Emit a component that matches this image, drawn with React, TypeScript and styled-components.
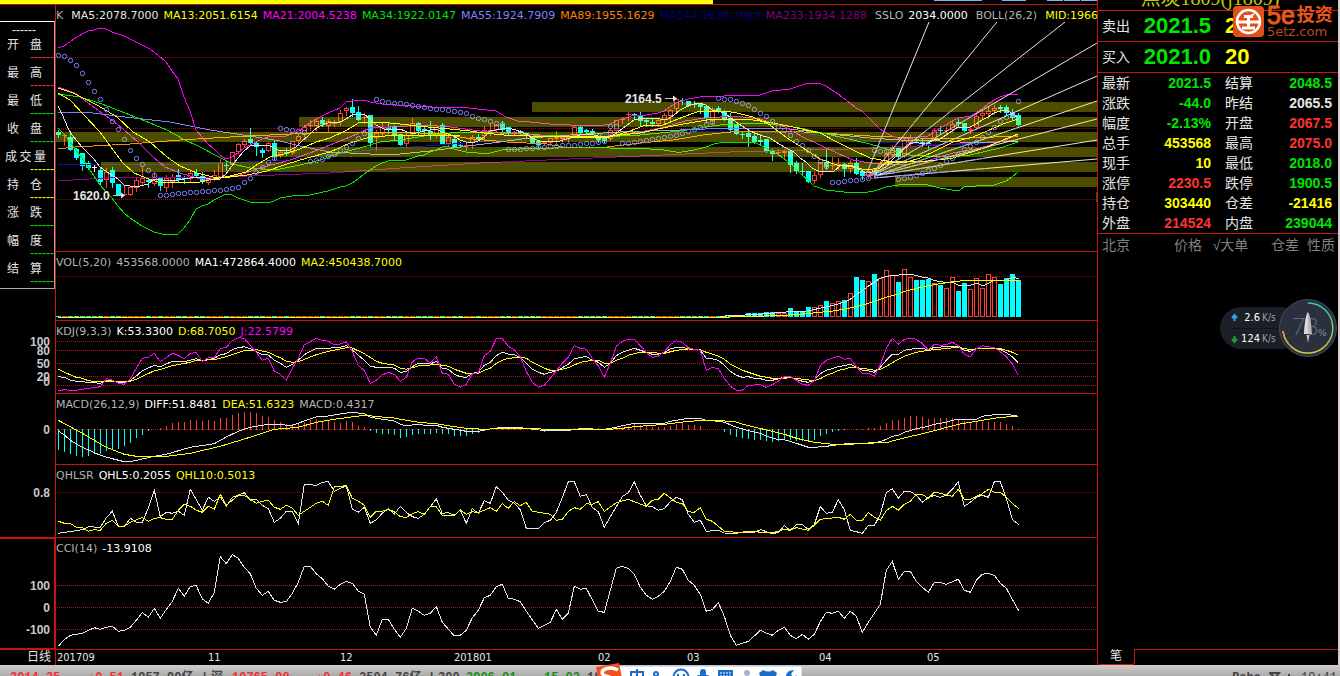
import React from "react";
import styled, { createGlobalStyle } from "styled-components";

const red = "#c8140a";
const sans = `"DejaVu Sans", "Noto Sans CJK SC", sans-serif`;
const bold = `"Liberation Sans", "Noto Sans CJK SC", sans-serif`;

const Global = createGlobalStyle`
  * { box-sizing: border-box; }
  html, body { margin: 0; background: #000; }
  button { font: inherit; cursor: pointer; }
`;

/* ---------- page frame ---------- */
const Screen = styled.div`
  position: relative;
  display: flex;
  flex-direction: column;
  height: 100vh;
  overflow: hidden;
  background: #000;
  color: #e6e6e6;
  font: 11px/20px ${sans};
`;
const Workspace = styled.main`
  display: flex;
  flex: none;
`;
const ChartSide = styled.section`
  flex: 1;
  min-width: 0;
`;
const TopStrip = styled.div`
  display: flex;
  height: 4px;
`;
const Progress = styled.div`
  width: 65%;
  background: #ff0;
`;
const Mark = styled.i<{ $w: number; $gap: number }>`
  width: ${(p) => p.$w}px;
  height: 1px;
  margin-left: ${(p) => p.$gap}px;
  background: #7cb4f0;
`;
const MarkRow = styled.div`
  display: flex;
  flex: 1;
  justify-content: flex-end;
`;
const ChartBody = styled.div`
  display: flex;
`;
const AxisColumn = styled.div`
  width: 55px;
  flex: none;
`;
const PanelColumn = styled.div`
  flex: 1;
  min-width: 0;
  border-left: 1px solid ${red};
`;

/* ---------- left column ---------- */
const FieldArea = styled.div`
  height: 316px;
  padding-top: 16px;
  border-top: 1px solid ${red};
`;
const FieldBox = styled.dl`
  margin: 0;
  border: solid #a8a8a8;
  border-width: 1px 1px 1px 0;
  border-top-color: #fff;
  font: 12px/18px ${bold};
`;
const Dashes = styled.dd<{ $color: string; $head?: boolean }>`
  height: 14px;
  margin: 0;
  padding: ${(p) => (p.$head ? "0 0 0 12px" : "0 0 0 30px")};
  line-height: ${(p) => (p.$head ? 17 : 14)}px;
  color: ${(p) => p.$color};
`;
const Field = styled.dt`
  display: flex;
  justify-content: space-between;
  height: 14px;
  padding: 0 12px 0 7px;
  &[data-wide="true"] {
    padding: 0 8px 0 5px;
  }
`;
const AxisCell = styled.div<{ $h: number; $active?: boolean }>`
  height: ${(p) => p.$h}px;
  border: solid ${red};
  border-width: ${(p) => (p.$active ? "2px 1px 2px 0" : "0")};
  svg {
    display: block;
    width: 100%;
    height: 100%;
    overflow: visible;
  }
  text {
    font: bold 12px ${bold};
    fill: #c8c8c8;
    text-anchor: end;
  }
`;
const Period = styled.div`
  height: 15px;
  padding-right: 4px;
  text-align: right;
  font: 12px/15px ${bold};
`;

/* ---------- chart panels ---------- */
const PanelBox = styled.section<{ $h: number }>`
  display: grid;
  height: ${(p) => p.$h}px;
  border-top: 1px solid ${red};
  overflow: hidden;
  > * {
    grid-area: 1 / 1;
    min-width: 0;
  }
  > svg {
    width: 100%;
    height: 100%;
  }
`;
const Legend = styled.header`
  display: flex;
  gap: 5px;
  height: 22px;
  line-height: 22px;
  overflow: hidden;
  white-space: nowrap;
  z-index: 1;
`;
const Tag = styled.span<{ $color: string; $wide?: boolean }>`
  color: ${(p) => p.$color};
  margin-right: ${(p) => (p.$wide ? 3 : 0)}px;
`;
const Months = styled.div`
  height: 16px;
  border-top: 1px solid ${red};
  svg {
    display: block;
    width: 100%;
    height: 15px;
  }
  text {
    font: 11px "DejaVu Sans Condensed", ${sans};
    fill: #e6e6e6;
  }
`;

/* ---------- quote column ---------- */
const Quote = styled.aside`
  display: flex;
  flex-direction: column;
  width: 241px;
  flex: none;
  border-left: 1px solid ${red};
  font: 14px/20px ${bold};
`;
const Title = styled.h1`
  display: flex;
  align-items: flex-end;
  justify-content: center;
  height: 10px;
  margin: 0;
  padding-right: 16px;
  overflow: hidden;
  font: 20px/24px "Liberation Serif", "Noto Sans CJK SC", serif;
  color: #c8c800;
`;
const Deal = styled.div`
  display: grid;
  grid-template-columns: 28px 81px 1fr;
  align-items: center;
  height: 31px;
  padding-left: 4px;
  border-top: 1px solid ${red};
`;
const Price = styled.strong`
  text-align: right;
  font-size: 22px;
  color: #00e600;
`;
const Lots = styled.strong`
  padding-left: 14px;
  font-size: 22px;
  color: #ff0;
`;
const Figures = styled.table`
  width: 100%;
  border-collapse: collapse;
  border: solid ${red};
  border-width: 1px 0;
  table-layout: fixed;
  th,
  td {
    height: 20px;
    padding: 0;
    line-height: 20px;
  }
  th {
    width: 32px;
    padding-left: 4px;
    font-weight: normal;
    text-align: left;
    white-space: nowrap;
  }
  th + td {
    width: 81px;
  }
  th + td + th {
    width: 42px;
    padding-left: 14px;
  }
  th + td + th + td {
    width: auto;
  }
`;
const Figure = styled.td<{ $color: string; $last?: boolean }>`
  font-weight: bold;
  text-align: right;
  color: ${(p) => p.$color};
  && {
    padding-right: ${(p) => (p.$last ? 6 : 0)}px;
  }
`;
const TickHead = styled.div`
  display: flex;
  height: 24px;
  padding: 0 3px 0 4px;
  line-height: 22px;
  color: #808080;
  span:first-child {
    flex: 1;
  }
  span + span {
    margin-left: 8px;
  }
  span:nth-child(3) {
    min-width: 41px;
    text-align: center;
  }
  span:nth-child(4) {
    margin-left: 20px;
  }
`;
const TabBar = styled.div`
  display: flex;
  height: 16px;
  margin-top: auto;
`;
const Tab = styled.button`
  width: 37px;
  height: 16px;
  padding: 0;
  border: solid ${red};
  border-width: 0 1px 1px 0;
  border-radius: 0 0 3px 3px;
  background: none;
  color: #e6e6e6;
  font-size: 12px;
  line-height: 15px;
`;
const TabRest = styled.div`
  flex: 1;
  border-top: 1px solid ${red};
`;
const Edge = styled.div`
  width: 2px;
  flex: none;
  background: #d4cccc;
`;

/* ---------- floating parts ---------- */
const Brand = styled.a`
  position: absolute;
  top: 5px;
  right: 7px;
  display: flex;
  gap: 3px;
  color: #e8581c;
  text-decoration: none;
  white-space: nowrap;
  svg {
    display: block;
  }
`;
const BrandText = styled.span`
  display: flex;
  flex-direction: column;
  width: 66px;
`;
const BrandName = styled.b`
  display: flex;
  align-items: center;
  font: bold 18px/20px ${bold};
  span {
    margin-right: 2px;
    font: 25px/20px ${bold};
    -webkit-text-stroke: 1px #e8581c;
  }
`;
const BrandUrl = styled.span`
  font: 13px/13px ${sans};
  color: #b8481c;
`;
const NetMeter = styled.div`
  position: absolute;
  top: 298px;
  right: 3px;
  display: flex;
  align-items: center;
  svg {
    display: block;
  }
`;
const Speeds = styled.div`
  display: flex;
  flex-direction: column;
  width: 82px;
  margin-right: -23px;
  padding-left: 10px;
  border-radius: 21px;
  background: #1b1f28;
`;
const Speed = styled.div`
  display: grid;
  grid-template-columns: 9px 19px 1fr;
  gap: 2px;
  align-items: center;
  height: 21px;
  font: 11px/20px "DejaVu Sans Condensed", ${sans};
  color: #fff;
  text-align: right;
  & + & {
    border-top: 1px solid #11141a;
  }
  small {
    font-size: 10px;
    text-align: left;
    color: #9a9ea8;
  }
`;

/* ---------- status bar ---------- */
const Status = styled.footer`
  display: flex;
  align-items: center;
  flex: none;
  height: 24px;
  padding: 2px 3px 0 10px;
  background: linear-gradient(#d0cecc, #a8a8a8 12px);
  font: bold 12px/20px "Liberation Mono", "Noto Sans CJK SC", monospace;
  color: #444;
  white-space: nowrap;
`;
const Cell = styled.span<{ $w: number; $color?: string }>`
  width: ${(p) => p.$w}px;
  flex: none;
  color: ${(p) => p.$color || "#444"};
`;
const Clock = styled.span`
  display: flex;
  align-items: center;
  gap: 8px;
  margin-left: auto;
  font-weight: normal;
`;
const Ime = styled.div`
  position: absolute;
  left: 596px;
  top: 663px;
  svg {
    display: block;
  }
`;

/* ---------- series ---------- */
const barX = (i: number) => 58.5 + 6 * i;
type Bar = [0 | 1, number, number, number, number];

/* up flag, body top, body bottom, high, low */
const bars: Bar[] = [
  [0,132,135,130,137],[1,135,135,135,145],[0,137,150,133,150],[0,149,158,148,159],[0,153,166,153,170],[0,163,168,161,169],[0,167,167,164,171],[0,170,182,167,184],[1,172,180,168,187],[0,170,183,167,187],
  [0,184,195,184,195],[1,194,195,186,195],[1,187,195,187,195],[1,180,188,177,191],[1,178,183,166,184],[0,180,182,177,187],[1,177,184,172,185],[0,177,186,177,190],[1,178,188,175,191],[1,177,182,174,187],
  [0,175,180,169,181],[0,178,179,176,183],[1,173,179,171,181],[0,173,176,169,177],[0,176,182,172,183],[1,179,183,177,184],[1,175,179,170,180],[1,163,177,159,177],[0,165,165,161,170],[1,152,165,152,165],
  [1,144,152,143,153],[1,141,145,139,147],[0,139,143,128,143],[0,143,147,141,155],[0,150,153,148,157],[1,143,151,142,151],[0,143,157,140,160],[1,152,156,150,157],[0,152,154,148,155],[1,141,153,141,154],
  [1,136,141,133,143],[1,127,135,125,136],[1,125,125,120,130],[1,121,126,119,130],[0,120,124,117,126],[1,121,126,119,132],[1,123,123,120,126],[1,113,122,110,125],[1,108,111,107,115],[0,107,113,99,116],
  [0,112,120,106,120],[1,117,118,113,123],[0,115,143,115,146],[1,133,138,130,150],[1,127,134,122,136],[0,127,129,123,133],[0,127,135,125,140],[0,134,145,134,145],[1,135,144,133,146],[1,123,134,118,137],
  [0,123,131,122,135],[0,129,131,127,134],[0,131,136,121,139],[1,127,135,125,137],[0,125,144,123,144],[1,137,144,133,146],[0,139,147,137,147],[0,145,146,142,147],[1,145,146,142,150],[1,137,143,135,148],
  [0,137,139,134,141],[1,130,136,126,141],[1,130,131,124,135],[1,125,130,124,131],[0,124,130,121,131],[0,127,134,127,134],[1,132,133,131,135],[0,131,133,130,135],[0,133,136,133,137],[0,137,143,137,143],
  [0,141,145,140,147],[1,142,143,141,145],[1,138,143,137,145],[1,137,139,131,143],[1,137,139,136,143],[1,137,139,135,142],[1,127,136,125,137],[0,127,133,126,134],[0,130,132,129,134],[0,131,134,129,137],
  [0,135,140,133,142],[0,137,141,136,142],[1,130,139,128,140],[1,120,131,120,131],[1,119,120,117,123],[1,114,115,112,120],[0,114,116,113,118],[0,115,121,112,125],[0,120,122,118,126],[0,122,124,119,126],
  [1,120,124,118,126],[1,115,120,113,123],[1,110,116,109,120],[1,99,109,98,111],[0,100,101,98,104],[0,101,106,101,106],[0,104,105,101,107],[0,104,107,103,113],[0,106,118,105,122],[1,109,121,107,123],
  [0,108,111,106,112],[0,112,119,110,120],[0,118,130,113,132],[0,125,134,125,134],[0,134,135,132,138],[0,133,137,131,146],[0,136,142,133,143],[0,140,142,134,145],[0,139,152,139,152],[0,151,154,149,160],
  [1,152,153,149,155],[1,151,153,149,158],[0,151,165,150,172],[0,163,171,161,173],[0,171,172,163,174],[0,171,182,171,182],[1,175,181,172,183],[1,162,175,162,177],[0,162,167,150,169],[1,165,166,157,169],
  [1,164,166,158,169],[0,164,169,163,176],[1,163,169,160,172],[0,163,174,158,174],[0,171,176,170,179],[1,171,176,169,178],[0,170,175,168,177],[1,163,171,161,173],[1,154,164,150,166],[1,148,155,145,157],
  [0,148,157,148,158],[1,140,156,138,157],[1,138,143,135,145],[0,139,141,137,143],[0,142,144,139,146],[0,143,146,141,148],[1,130,139,128,140],[0,130,131,126,134],[1,130,131,127,135],[1,124,130,121,132],
  [0,122,124,119,126],[0,123,131,123,131],[1,129,131,126,133],[1,116,128,114,129],[1,113,116,111,118],[1,111,114,106,118],[1,108,111,105,114],[0,107,109,105,112],[0,107,113,105,115],[0,113,118,109,120],
  [0,115,125,113,125],
];

const sar = [
  55,56,60,65,73,82,91,99,109,121,129,139,150,158,164,170,175,
  195,195,194,193,193,192,192,191,191,190,190,189,188,187,182,178,172,167,162,158,
  128,129,130,131,132,
  161,160,159,156,154,150,147,143,138,133,129,
  99,101,102,103,103,104,105,106,107,108,109,109,110,111,112,113,116,118,119,121,123,124,
  149,149,149,148,148,147,147,146,146,145,145,145,144,143,143,142,141,
  126,126,
  143,143,142,141,140,139,138,137,136,135,133,131,129,127,124,122,
  98,99,99,101,103,105,109,113,116,121,126,130,135,141,145,150,156,161,166,
  182,182,181,180,180,179,178,
  150,151,151,150,
  179,178,177,175,173,170,168,165,161,158,154,149,146,142,137,132,127,121,117,114,
  101,
];

const overlays: [string, string][] = [
  ["#10109a", "58,164 200,164 290,160 370,150 440,145 530,138 600,135 720,131 800,133 880,142 950,145 1018,141"],
  ["#900090", "58,181 120,177 220,177 330,173 400,168 480,163 570,159 640,156 730,152 850,149 940,145 1018,140"],
  ["#ff8c00", "58,149 75,147 130,144 180,140 230,137 290,134 330,132 400,132 440,134 473,139 507,142 547,144 563,147 607,147 640,143 673,140 703,135 730,132 753,131 787,131 820,133 870,136 920,138 970,138 1018,136"],
  ["#8080ff", "58,113 85,112 125,117 170,122 210,130 250,136 280,141 300,146 330,152"],
  ["#a0a0c8", "330,152 370,154 400,154 430,151 460,147 500,142 530,138 570,135 620,132 680,130"],
  ["#8080ff", "680,130 730,128 790,129"],
  ["#a0a0c8", "790,129 830,134 870,138 900,140 940,141 980,143 1018,141"],
  ["#00e600", "58,94 80,97 102,104 125,113 150,123 167,130 183,139 200,147 217,156 233,164 250,168 275,170 300,165 320,160 340,153 360,148 380,142 400,140 430,135 460,132 500,133 560,136 600,137 640,135 680,131 720,125 760,123 780,125 800,128 840,137 870,144 890,150 910,155 940,157 970,155 1000,148 1018,142"],
  ["#e61ee6", "58,87 75,93 95,108 117,124 137,141 153,157 165,167 180,173 197,178 213,179 240,175 260,168 290,160 310,153 330,145 350,137 370,128 390,127 425,125 450,127 480,131 520,134 560,137 600,137 640,132 665,127 685,121 705,118 735,116 760,119 785,127 803,137 820,145 837,153 853,160 870,163 887,165 910,164 930,160 953,153 980,148 1000,142 1018,135"],
  ["#ffff00", "58,88 73,93 97,105 117,117 133,132 150,142 167,157 180,166 197,173 213,177 230,177 247,175 267,171 287,164 307,158 330,152 350,143 370,137 400,135 460,136 560,136 610,136 640,133 663,128 683,124 707,120 730,119 753,120 773,123 793,127 820,133 837,142 853,150 870,158 887,161 920,162 953,158 987,147 1003,140 1018,134"],
  ["#ffff00", "58,93 70,100 84,115 100,132 113,150 123,163 134,173 146,178 158,182 180,183 200,182 214,179 230,176 246,172 258,164 270,157 284,154 300,149 316,142 330,138 347,130 360,122 380,122 400,124 417,126 450,129 470,131 484,133 504,135 530,136 570,137 610,137 630,131 643,126 663,125 683,117 697,112 724,111 737,113 753,117 770,125 787,138 803,148 820,159 837,165 853,167 867,170 880,168 887,162 907,162 920,158 937,150 953,142 973,137 987,131 1003,124 1018,119"],
  ["#e6e6e6", "58,106 62,114 68,128 72,135 82,147 94,159 100,167 110,174 118,179 124,185 136,187 148,184 154,179 166,181 178,180 190,178 202,177 214,180 220,179 226,174 232,166 238,158 244,151 250,146 262,145 270,146 278,150 288,151 296,147 302,141 308,136 314,130 320,126 328,123 340,122 346,119 352,115 364,114 370,119 376,125 386,130 400,129 412,134 424,131 436,129 442,132 454,136 460,140 466,142 472,143 478,141 484,137 490,131 496,130 508,128 516,130 526,134 532,138 540,141 550,142 560,141 570,138 580,135 590,134 598,136 606,138 612,136 618,132 626,126 634,120 642,118 650,118 660,119 668,119 674,115 680,110 688,106 694,104 700,103 706,105 712,110 718,111 724,113 730,117 736,122 742,126 750,131 760,135 770,138 776,142 784,147 794,152 800,158 806,162 812,168 820,172 834,171 840,166 850,165 856,167 864,172 872,172 880,170 886,167 892,160 898,154 904,149 910,144 916,142 922,144 928,143 934,140 940,139 946,135 952,131 958,127 970,127 976,124 982,120 988,117 994,113 1000,111 1006,110 1012,113 1018,118"],
  ["#ff00ff", "58,48 64,46 74,39 82,34 88,31 94,30 100,28 106,29 112,32 124,36 136,42 150,49 158,55 166,62 172,71 178,79 184,97 190,111 196,130 202,137 208,144 214,149 220,155 226,159 232,157 238,153 244,148 256,142 262,139 268,137 286,136 298,132 304,127 310,123 316,119 328,113 340,108 346,102 352,101 364,100 370,102 382,104 412,106 430,107 448,108 460,107 478,109 496,111 506,117 518,121 530,122 550,124 570,125 604,125 610,124 616,121 622,119 628,117 634,115 646,115 658,113 664,111 670,107 676,103 682,101 688,99 700,97 712,96 724,96 760,95 772,91 790,89 802,85 808,83 818,83 826,86 838,94 850,103 856,108 862,111 868,117 874,123 880,129 886,133 892,136 898,138 904,139 910,138 928,136 934,132 940,128 946,125 952,121 958,118 970,116 976,113 982,109 988,104 994,100 1000,97 1006,95 1012,94 1018,95"],
  ["#00e600", "58,128 64,134 70,142 76,150 82,158 88,167 94,176 100,185 106,192 112,198 118,206 124,213 130,218 142,226 154,232 162,234 178,234 184,228 190,220 196,209 202,206 208,204 214,200 226,194 232,195 238,198 250,202 268,203 274,201 280,198 292,196 310,195 328,191 334,189 340,187 346,186 352,183 358,179 364,174 370,170 376,166 382,163 388,161 406,160 412,158 418,156 424,155 430,152 436,150 442,147 448,146 454,149 466,152 478,153 490,153 502,150 520,149 590,147 610,148 634,148 650,149 664,150 676,152 682,152 694,150 706,147 714,144 724,142 742,142 756,143 766,148 772,152 778,154 784,159 790,163 796,169 802,175 808,180 814,186 826,190 844,192 862,193 874,191 886,187 898,185 904,184 928,185 940,188 952,190 960,190 964,187 970,186 976,186 994,185 1006,181 1012,177 1018,172"],
];

const zones = [[56,132],[101,162],[272,147],[299,117],[532,102],[895,177]];
const rays = [[866,175,929,22],[872,174,997,22],[868,176,1065,22],[870,176,1097,43],[870,176,1097,76],[874,176,1097,101],[874,176,1097,119],[874,176,1097,140],[874,178,1097,159]];

/* Each run is "originX originY x y x y ...", offsets in thirds of a pixel. */
const trace = (...runs: string[]) =>
  runs
    .map((run) => {
      const [ox, oy, ...v] = run.trim().split(/[\s,]+/).map(Number);
      const out: string[] = [];
      for (let k = 0; k < v.length; k += 2)
        out.push(`${(ox + v[k] / 3).toFixed(1)},${(oy + v[k + 1] / 3).toFixed(1)}`);
      return out.join(" ");
    })
    .join(" ");

const kdj: [string, string][] = [
  ["#e6e6e6", trace(
    "0 245 175,395 193,397 211,406 229,409 265,412 301,415 319,406 337,407 355,412 373,413 391,406 409,393 427,377 463,361 481,365 517,349 553,350 589,341 607,348 643,340 661,329 679,326 697,314 715,308 733,305 751,311 787,329 805,330 823,346 841,355 859,367 877,358 895,346 913,329 931,319 949,310 985,310 1003,308 1021,307 1039,302 1057,314 1075,331 1093,346 1111,364 1129,367 1165,367 1183,370",
    "400 310 1,187 19,185 37,170 55,160 91,162 109,154 127,175 145,178 163,193 181,200 199,202 217,190 235,187 253,166 271,157 289,137 307,127 325,132 343,134 361,142 379,160 397,178 415,187 433,193 451,187 469,183 487,173 505,163 523,146 559,139 577,151 595,157 613,172 631,160 649,137 667,127 703,115 739,127 757,133 775,133 793,127 811,117 829,112 865,115 901,121 919,145 937,146 955,151 973,166 991,184 1009,196 1027,202",
    "720 250 85,380 103,385 121,386 139,391 157,391 193,382 211,382 247,394 265,397 283,390 301,371 319,361 355,350 391,343 409,352 427,361 445,362 463,367 481,352 499,331 517,313 535,313 553,301 589,295 607,295 625,299 643,292 715,289 733,301 751,304 769,296 823,294 841,299 859,308 877,320 895,338")],
  ["#ffff00", trace(
    "0 245 175,373 193,382 211,389 229,397 247,400 265,407 283,409 391,409 409,403 463,377 481,374 517,362 571,352 589,346 643,344 679,335 733,317 769,314 805,322 823,331 841,338 859,349 877,352 895,350 949,329 985,319 1039,308 1057,309 1093,326 1129,349 1147,355 1183,360",
    "400 310 1,175 19,178 55,168 91,165 109,163 145,169 163,178 199,190 235,190 253,181 271,175 289,160 307,151 325,145 361,142 379,145 397,157 433,175 451,181 469,182 505,173 541,157 577,151 595,151 613,160 631,160 649,151 667,145 685,136 703,131 721,127 793,130 829,121 865,117 901,119 919,127 955,138 973,148 991,162 1009,172 1027,181",
    "720 250 85,367 121,379 157,385 175,386 211,383 283,392 301,386 319,376 337,370 355,361 373,358 391,352 427,355 463,361 481,358 499,349 517,338 535,328 553,319 589,307 625,301 715,292 751,299 787,295 841,296 859,301 877,307 895,316")],
  ["#ff00ff", trace(
    "0 245 175,437 193,434 211,436 229,436 247,433 265,430 283,428 301,425 319,401 337,405 355,415 373,418 391,401 409,370 427,340 445,337 463,325 481,350 499,338 517,325 535,331 553,341 571,325 589,323 607,350 625,338 643,338 661,311 679,307 697,287 715,278 733,280 751,301 769,322 787,346 805,340 823,378 841,388 859,406 877,370 895,340 913,299 931,290 949,280 967,286 985,289 1003,299 1021,297 1039,290 1057,320 1075,361 1093,377 1111,415 1129,406 1147,390 1165,382 1183,388",
    "400 310 1,214 19,202 37,155 55,145 73,145 91,160 109,140 127,190 145,193 163,223 181,232 199,223 217,192 235,188 253,137 271,124 289,86 307,86 325,109 343,119 361,140 379,184 397,217 415,232 433,226 451,205 487,160 505,142 523,107 541,115 559,118 577,145 595,168 613,202 631,160 649,109 667,94 685,88 703,88 721,107 739,127 757,142 775,139 793,125 811,104 829,92 847,97 865,113 883,118 901,121 919,181 937,172 955,176 973,205 991,229 1009,241 1027,241",
    "720 250 85,406 121,404 139,412 157,404 175,394 193,380 211,379 229,392 247,403 265,406 283,392 301,347 319,331 355,319 373,328 391,325 409,350 427,370 445,370 463,379 481,345 499,295 517,265 535,283 553,268 571,265 589,268 607,281 625,299 643,283 661,286 679,284 697,277 715,287 733,313 751,320 769,296 787,287 823,293 841,305 859,320 877,342 895,376")],
];

const macd: [string, string][] = [
  ["#e6e6e6", trace(
    "0 245 175,558 193,570 211,586 247,607 301,631 337,641 373,650 391,650 409,646 463,634 499,628 571,607 643,596 679,576 715,559 751,547 805,538 877,541 913,528 949,516 985,513 1021,507 1057,502 1093,506 1111,517 1129,520 1183,528",
    "400 310 1,343 19,347 55,343 91,348 109,346 127,352 181,361 199,364 235,364 271,357 307,352 361,353 415,360 505,361 541,356 613,358 649,352 667,347 703,340 793,340 811,334 865,325 901,325 919,331 955,334 973,337 991,344 1009,352 1027,356",
    "720 250 85,542 121,550 139,559 175,569 193,569 229,580 265,592 283,592 319,589 355,584 391,580 427,580 463,578 481,575 499,568 517,559 535,556 553,547 589,536 625,529 643,523 679,517 697,511 715,508 769,508 787,499 823,494 859,493 895,499")],
  ["#ffff00", trace(
    "0 245 175,526 247,565 319,607 373,628 409,634 499,634 571,625 661,604 769,571 823,553 895,547 949,532 1003,523 1093,511 1147,516 1183,519",
    "400 310 1,328 55,337 109,341 163,350 199,355 253,358 307,355 397,355 433,358 613,359 667,355 703,350 757,346 811,341 865,334 919,331 1000,334 1027,342",
    "720 250 85,527 157,544 193,553 229,565 283,577 337,583 391,583 427,580 499,578 535,568 625,547 715,523 787,511 841,502 895,499")],
];
const histogram = [
  ...[615,620,627,632,636,633,627,627,618,610,610,603,594,579,568,557,553,549,541,534,531,531,525,525,528,525,528,519,519,510,504,499,501,504,513,516,525,531,537,537,535,529,525,522,527,528,531,532,528,531,541,546,557,563,567,567,569].map((v) => v - 553),
  ...[384,380,374,371,371,371,369,371,371,377,377,377,372,368,362,358,355,353,352,353,355,358,358,360,365,362,360,358,359,354,355,354,354,354,357,356,354,349,346,340,343,347,350,350,350,347,341,338,344,345,348,358,358,358,365,375,381,384,387].map((v) => v - 358),
  ...[570,570,573,576,573,568,570,573,573,574,570,557,552,546,541,539,538,537,537,534,534,528,519,510,510,504,498,498,501,507,504,504,504,504,507,513,516,516,516,514,514,516,522,528,537].map((v) => v - 538),
];

const qhl: [string, string][] = [
  ["#e6e6e6", trace(
    "0 460 175,220 247,209 265,200 301,202 319,173 337,154 355,199 373,199 391,175 409,187 427,187 445,145 463,91 481,170 499,157 517,160 535,154 553,166 571,88 607,151 625,112 643,124 661,112 679,139 697,112 733,98 751,121 769,118 787,136 805,146 823,187 841,175 859,154 877,154 895,190 913,73 949,76 967,67 985,65 1003,94 1039,77 1057,148 1075,157 1093,142 1111,190 1129,179 1147,160 1165,146 1183,163",
    "400 460 1,139 19,157 37,170 55,175 73,163 91,140 109,116 127,160 145,158 163,166 181,150 199,190 217,146 235,160 253,122 271,130 289,80 307,97 325,121 343,130 361,149 379,205 415,206 433,188 451,181 469,157 487,113 505,65 523,65 541,109 559,104 577,142 595,155 613,202 631,170 667,110 685,98 703,66 721,106 739,137 757,140 775,151 793,146 811,125 829,112 847,119 865,163 883,187 901,181 919,214 955,211 973,219 1009,220 1027,216",
    "740 460 30,216 45,216 63,209 97,222 117,216 133,197 151,211 169,194 187,194 205,208 223,194 241,140 259,160 277,157 295,119 313,149 331,211 349,215 367,220 385,197 403,197 421,163 439,98 457,86 475,115 493,94 511,94 529,106 547,127 565,113 583,106 601,112 619,106 637,88 655,65 673,139 691,127 709,112 727,106 745,112 763,65 781,65 799,115 817,178 836,194")],
  ["#ffff00", trace(
    "0 460 175,184 193,190 211,190 229,202 247,203 265,214 283,209 301,211 319,190 337,181 355,199 373,199 391,187 427,172 445,184 463,175 481,173 499,178 517,178 535,151 553,133 571,139 589,151 607,157 625,139 643,148 661,103 679,136 697,121 715,106 733,106 769,130 787,124 805,121 823,142 841,148 859,136 877,145 895,166 949,130 967,124 985,136 1003,80 1039,77 1057,115 1075,124 1093,136 1111,172 1129,154 1147,154 1165,148 1183,155",
    "400 460 1,170 19,172 37,161 55,155 73,163 91,140 109,140 127,166 163,166 181,150 199,163 217,155 235,158 271,143 289,154 307,131 325,145 343,125 361,137 379,127 397,154 451,163 469,181 487,178 505,154 523,143 541,148 559,131 577,133 595,125 613,154 649,128 685,118 703,125 739,139 757,121 775,118 793,100 829,127 847,131 865,155 883,157 901,143 919,178 937,184 973,214 1009,217",
    "740 460 30,215 80,217 97,219 133,208 151,211 169,203 205,211 223,196 241,178 295,172 313,178 331,163 349,181 367,181 385,157 403,172 421,181 439,152 457,139 475,151 493,133 511,124 529,103 547,103 565,115 583,97 601,100 637,109 655,88 673,118 691,118 727,101 745,88 763,97 781,97 799,112 817,130 836,146")],
];

const cci: [string, string][] = [
  ["#e6e6e6", trace(
    "0 460 175,559 193,539 211,526 247,520 283,503 301,508 319,502 337,499 355,514 373,511 391,502 409,481 427,457 445,472 463,445 481,475 499,448 517,424 535,385 553,409 571,379 589,377 607,417 625,430 643,397 661,290 679,311 697,284 715,295 733,322 751,341 769,385 787,406 805,394 823,421 841,427 859,425 877,400 895,367 913,319 931,319 949,341 967,356 985,379 1003,388 1021,373 1039,364 1057,370 1075,394 1093,403 1111,502 1129,526 1147,478 1165,478 1183,508",
    "400 460 1,532 19,505 37,445 55,454 73,466 91,460 109,440 127,487 163,528 181,526 199,511 217,473 235,451 253,413 271,406 289,380 307,373 325,415 343,418 361,425 379,454 415,505 451,487 469,448 487,478 505,460 523,379 541,388 559,385 595,454 613,457 631,391 649,325 667,319 685,325 703,343 721,382 739,406 757,418 775,409 793,394 811,364 829,322 847,328 865,361 883,376 901,403 919,454 937,449 955,428 973,469 991,526 1009,556",
    "740 460 26,544 61,511 80,520 97,526 115,511 133,502 151,526 169,536 187,523 205,538 223,523 241,485 259,457 277,460 295,454 313,475 331,454 349,469 367,517 385,487 421,433 439,331 457,304 475,358 493,334 511,334 529,364 547,382 565,397 583,367 601,367 619,373 655,358 673,391 691,397 709,361 727,343 745,340 763,346 781,370 799,385 817,418 836,452")],
];

const volume = [195,196,197,189,189,189,186,186,187,188,174,184,184,171,171,165,153,157,151,150,127,81,90,91,72,82,58,73,96,55,81,90,90,87,99,105,112,79,123,99,115,82,112,70,79,102,84,72,90].map((v) => Math.round((200 - v) / 3));
const volumeLines: [string, string][] = [
  ["#e6e6e6", trace("720 250 0,199 50,196 100,194 150,190 190,187 215,184 260,183 300,175 340,166 375,156 390,148 410,133 450,105 480,85 510,77 550,74 575,73 600,80 625,84 645,92 680,98 700,98 715,106 750,106 770,100 790,107 820,93 860,90 880,82 896,86")],
  ["#ffff00", trace("0 250 175,202 2160,202", "720 250 100,199 170,197 240,193 300,187 340,183 380,176 420,167 460,155 500,141 535,133 550,125 580,118 620,108 660,101 700,95 740,91 896,91")],
];

/* ---------- drawing helpers ---------- */
const Lines = ({ data }: { data: [string, string][] }) => (
  <g fill="none" strokeWidth="1" shapeRendering="crispEdges">
    {data.map(([color, points], i) => (
      <polyline key={i} stroke={color} points={points} />
    ))}
  </g>
);

type PanelProps = {
  label: string;
  top: number;
  height: number;
  grid: number[];
  gridColor?: string;
  legend: [string, string, boolean?][];
  children: React.ReactNode;
};
const Panel = ({ label, top, height, grid, gridColor = "#b41414", legend, children }: PanelProps) => (
  <PanelBox $h={height} aria-label={label}>
    <Legend>
      {legend.map(([color, text, wide], i) => (
        <Tag key={i} $color={color} $wide={wide}>{text}</Tag>
      ))}
    </Legend>
    <svg aria-hidden="true">
      <g transform={`translate(-56 ${-top - 1})`}>
        {grid.map((y) => (
          <line key={y} x1="57" x2="200%" y1={y + 0.5} y2={y + 0.5} stroke={gridColor} strokeDasharray="1 1" shapeRendering="crispEdges" />
        ))}
        {children}
      </g>
    </svg>
  </PanelBox>
);

const Candles = () => (
  <g shapeRendering="crispEdges">
    {bars.map(([up, t, b, h, l], i) => {
      const x = barX(i);
      const c = i === 6 ? "#fff" : up ? "#ff3c32" : "#00ffff";
      const flat = b - t < 2;
      return (
        <g key={i} stroke={c} fill={up ? "#000" : c}>
          <line x1={x} x2={x} y1={h} y2={l + 1} />
          {flat ? <line x1={x - 2.5} x2={x + 2.5} y1={t + 0.5} y2={t + 0.5} /> : <rect x={x - 2} y={t + 0.5} width="4" height={b - t - 1} />}
        </g>
      );
    })}
  </g>
);

const Axis = ({ h, top, labels, active }: { h: number; top: number; labels: [string, number][]; active?: boolean }) => (
  <AxisCell $h={h} $active={active}>
    <svg>
      {labels.map(([t, y]) => (
        <text key={t} x="50" y={y - top + 5}>{t}</text>
      ))}
    </svg>
  </AxisCell>
);

const g = "#00e600";
const r = "#ff3232";
const y = "#ffff00";
const w = "#e6e6e6";
const dim = "#b4b4b4";

const fields: [string, string][] = [
  ["开盘", r], ["最高", r], ["最低", g], ["收盘", g], ["成交量", y], ["持仓", y], ["涨跌", g], ["幅度", g], ["结算", g],
];
const figures: [string, string, string, string, string, string][] = [
  ["最新", "2021.5", g, "结算", "2048.5", g],
  ["涨跌", "-44.0", g, "昨结", "2065.5", w],
  ["幅度", "-2.13%", g, "开盘", "2067.5", r],
  ["总手", "453568", y, "最高", "2075.0", r],
  ["现手", "10", y, "最低", "2018.0", g],
  ["涨停", "2230.5", r, "跌停", "1900.5", g],
  ["持仓", "303440", y, "仓差", "-21416", y],
  ["外盘", "214524", r, "内盘", "239044", g],
];
const months: [string, number][] = [["201709", 57], ["11", 208], ["12", 340], ["201801", 454], ["02", 598], ["03", 687], ["04", 819], ["05", 927]];

export default function App() {
  return (
    <Screen>
      <Global />
      <Workspace>
        <ChartSide>
          <TopStrip>
            <Progress />
            <MarkRow>
              <Mark $w={48} $gap={0} />
              <Mark $w={24} $gap={20} />
              <Mark $w={16} $gap={21} />
              <Mark $w={16} $gap={1} />
              <Mark $w={16} $gap={1} />
            </MarkRow>
          </TopStrip>
          <ChartBody>
            <AxisColumn>
              <FieldArea>
                <FieldBox>
                  <Dashes $color={w} $head>------</Dashes>
                  {fields.map(([name, color]) => (
                    <React.Fragment key={name}>
                      <Field data-wide={name.length > 2}>
                        {name.split("").map((ch) => <span key={ch}>{ch}</span>)}
                      </Field>
                      <Dashes $color={color}>------</Dashes>
                    </React.Fragment>
                  ))}
                </FieldBox>
              </FieldArea>
              <Axis h={73} top={320} labels={[["100", 341], ["80", 350], ["50", 363], ["20", 376], ["0", 381]]} />
              <Axis h={71} top={393} labels={[["0", 429]]} />
              <Axis h={73} top={464} labels={[["0.8", 492]]} />
              <Axis h={113} top={539} labels={[["100", 585], ["0", 607], ["-100", 629]]} active />
              <Period>日线</Period>
            </AxisColumn>
            <PanelColumn>
              <Panel label="K" top={4} height={247} grid={[57, 128, 199]} gridColor="#8c0c0c"
                legend={[[dim, "K", true], [w, "MA5:2078.7000"], [y, "MA13:2051.6154"], ["#ff00ff", "MA21:2004.5238"], [g, "MA34:1922.0147"], ["#8080ff", "MA55:1924.7909"], ["#ff8000", "MA89:1955.1629"], ["#000080", "MA144:1938.7083"], ["#800080", "MA233:1934.1288", true], [dim, "SSLO"], ["#fff", "2034.0000", true], [dim, "BOLL(26,2)", true], [y, "MID:1966.4519"]]}>
                <Candles />
                <Lines data={overlays} />
                <g fill="none" stroke="#8080ff">
                  {sar.map((v, i) => <circle key={i} cx={barX(i)} cy={v + 0.5} r="2.2" />)}
                </g>
                <g>
                  {rays.map(([x1, y1, x2, y2], i) => (
                    <g key={i}>
                      <line x1={x1} y1={y1} x2={x2} y2={y2} stroke="#fff" strokeOpacity="0.9" />
                      <line x1={x1} y1={y1} x2={(x1 + x2) / 2} y2={(y1 + y2) / 2} stroke="#8888ff" strokeDasharray="6 3" />
                    </g>
                  ))}
                  <path d="M866 172l12 5M864 176l14-5M868 170l4 9M874 170l-2 9" stroke="#ff5032" strokeDasharray="2 2" />
                  <path d="M878 174L1018 128" stroke="#00e600" strokeDasharray="2 4" />
                </g>
                <g fill="#ffff00" opacity="0.3">
                  {zones.map(([x, top]) => <rect key={top} x={x} y={top} width="100%" height="10" />)}
                  <rect x="1096" y="192" width="2" height="10" />
                </g>
                <g fill="#e6e6e6" stroke="#c8c8c8">
                  <path d="M113 195.500H123" /><path d="M121 192.500l4 3-4 3z" stroke="none" />
                  <path d="M665 98.500H675" /><path d="M673 95.500l4 3-4 3z" stroke="none" />
                </g>
                <g fill={w} fontFamily="Liberation Sans, sans-serif" fontWeight="bold" fontSize="12">
                  <text x="73" y="200">1620.0</text>
                  <text x="625" y="103">2164.5</text>
                </g>
              </Panel>
              <Panel label="VOL" top={251} height={69} grid={[276]} gridColor="#8c0c0c" legend={[[dim, "VOL(5,20)"], [dim, "453568.0000"], ["#fff", "MA1:472864.4000"], [y, "MA2:450438.7000"]]}>
                <g shapeRendering="crispEdges">
                  {bars.map(([up], i) => {
                    const h = i < 112 ? 1 : Math.max(1, volume[i - 112]);
                    const x = barX(i);
                    return up && h > 3
                      ? <rect key={i} x={x - 2} y={317 - h + 0.5} width="4" height={h - 1} fill="#000" stroke="#ff3c32" />
                      : <rect key={i} x={x - 2.5} y={317 - h} width="5" height={h} fill={up ? "#ff3c32" : "#00ffff"} />;
                  })}
                </g>
                <Lines data={volumeLines} />
              </Panel>
              <Panel label="KDJ" top={320} height={73} grid={[341, 350, 363, 376, 385]} legend={[[dim, "KDJ(9,3,3)"], ["#fff", "K:53.3300"], [y, "D:68.7050"], ["#ff00ff", "J:22.5799"]]}>
                <Lines data={kdj} />
              </Panel>
              <Panel label="MACD" top={393} height={71} grid={[429]} legend={[[dim, "MACD(26,12,9)"], ["#fff", "DIFF:51.8481"], [y, "DEA:51.6323"], [dim, "MACD:0.4317"]]}>
                <g shapeRendering="crispEdges">
                  {histogram.map((v, i) => (
                    <line key={i} x1={barX(i)} x2={barX(i)} y1={v > 0 ? 429 : 430} y2={429.5 + v / 3} stroke={v > 0 ? "#00ffff" : "#ff3c32"} />
                  ))}
                </g>
                <Lines data={macd} />
              </Panel>
              <Panel label="QHLSR" top={464} height={73} grid={[492]} gridColor="#8c0c0c" legend={[[dim, "QHLSR"], ["#fff", "QHL5:0.2055"], [y, "QHL10:0.5013"]]}>
                <Lines data={qhl} />
              </Panel>
              <Panel label="CCI" top={537} height={112} grid={[585, 607, 629]} legend={[[dim, "CCI(14)"], ["#fff", "-13.9108"]]}>
                <Lines data={cci} />
              </Panel>
              <Months>
                <svg>
                  {months.map(([t, x]) => <text key={t} x={x - 56} y="11">{t}</text>)}
                </svg>
              </Months>
            </PanelColumn>
          </ChartBody>
        </ChartSide>
        <Quote>
          <Title>焦炭1809(j1809)</Title>
          <Deal><span>卖出</span><Price>2021.5</Price><Lots>20</Lots></Deal>
          <Deal><span>买入</span><Price>2021.0</Price><Lots>20</Lots></Deal>
          <Figures>
            <tbody>
              {figures.map(([a, av, ac, b, bv, bc]) => (
                <tr key={a}>
                  <th scope="row">{a}</th>
                  <Figure $color={ac}>{av}</Figure>
                  <th scope="row">{b}</th>
                  <Figure $color={bc} $last>{bv}</Figure>
                </tr>
              ))}
            </tbody>
          </Figures>
          <TickHead><span>北京</span><span>价格</span><span>√大单</span><span>仓差</span><span>性质</span></TickHead>
          <TabBar><Tab type="button">笔</Tab><TabRest /></TabBar>
        </Quote>
        <Edge />
      </Workspace>
      <Status>
        <Cell $w={78} $color="#f03030">3014.35</Cell>
        <Cell $w={43} $color="#f03030">↓0.51</Cell>
        <Cell $w={70}>1957.90亿</Cell>
        <Cell $w={10}>|</Cell>
        <Cell $w={21}>深</Cell>
        <Cell $w={84} $color="#f03030">10765.98</Cell>
        <Cell $w={43} $color="#f03030">↓0.46</Cell>
        <Cell $w={69}>2504.76亿</Cell>
        <Cell $w={10}>|</Cell>
        <Cell $w={28}>300</Cell>
        <Cell $w={78} $color="#149014">3906.01</Cell>
        <Cell $w={43} $color="#149014">15.03</Cell>
        <Cell $w={40}>1857</Cell>
        <Clock>
          <b>Baba</b>
          <svg width="24" height="14" fill="none" stroke="#444" strokeWidth="2"><path d="M1 2h9L6 7zM6 6v7M15 13V7M20 13V3" /></svg>
          <span>19:41</span>
        </Clock>
      </Status>
      <Brand href="#">
        <svg width="31" height="32" viewBox="0 0 31 32">
          <rect y="1" width="31" height="31" rx="4" fill="#e05018" />
          <circle cx="15.500" cy="16.500" r="11.500" fill="none" stroke="#fff" strokeWidth="2.500" />
          <path d="M11 11.500h9M5 17h21M9 23h13M15.500 12v11" stroke="#fff" strokeWidth="3" fill="none" />
          <path d="M21 9l-7 4" stroke="#fff" strokeWidth="2" />
        </svg>
        <BrandText>
          <BrandName><span>5e</span>投资</BrandName>
          <BrandUrl>5etz.com</BrandUrl>
        </BrandText>
      </Brand>
      <NetMeter>
        <Speeds>
          <Speed>
            <svg width="9" height="9" stroke="#30a8e8" strokeWidth="2" fill="none"><path d="M4.500 8V2M2 5l2.500-3L7 5" /></svg>
            2.6<small>K/s</small>
          </Speed>
          <Speed>
            <svg width="9" height="9" stroke="#20a030" strokeWidth="2" fill="none"><path d="M4.500 1v6M2 4l2.500 3L7 4" /></svg>
            124<small>K/s</small>
          </Speed>
        </Speeds>
        <svg width="58" height="60" viewBox="0 0 58 60">
          <defs>
            <linearGradient id="ring" x1="0" y1="0" x2="0" y2="1">
              <stop offset="0" stopColor="#28c8c8" /><stop offset=".6" stopColor="#88c860" /><stop offset="1" stopColor="#d8c838" />
            </linearGradient>
          </defs>
          <circle cx="29" cy="30" r="28.500" fill="#2b303e" stroke="#454a58" />
          <path d="M29 5A25 25 0 1 1 4 33" fill="none" stroke="url(#ring)" strokeWidth="1.500" />
          <path d="M4 33a25 25 0 0 0 5 12" fill="none" stroke="#e8a030" strokeWidth="1.500" />
          <text x="13" y="37" fontSize="23" fontFamily="Lato, sans-serif" fontWeight="300" fill="#666c78">78</text>
          <text x="39" y="38" fontSize="9" fill="#8a8e98">%</text>
          <path d="M29 14c3 5 3 12 4 22h-8c1-10 1-17 4-22z" fill="#b8b8b8" /><path d="M29 14v22h-4c1-10 1-17 4-22z" fill="#d8d8d8" />
          <path d="M27.500 37h3L29 45z" fill="#c0c0c0" />
        </svg>
      </NetMeter>
      <Ime>
        <svg width="206" height="20" viewBox="0 0 206 20">
          <rect x="20" y="3" width="186" height="20" fill="#fff" stroke="#b0c0dc" />
          <path d="M0 4L23 0l4 20H3z" fill="#f4501c" />
          <path d="M22 7C14 3 6 6 6 10s12 3 14 9" fill="none" stroke="#fff" strokeWidth="3.500" />
          <g fill="none" stroke="#1c6cc8" strokeWidth="2">
            <path d="M35 9h12v7H35zM41 6v14" />
            <circle cx="60" cy="11" r="2" />
            <circle cx="85" cy="14" r="7.500" /><path d="M82 11v3M88 11v3" />
          </g>
          <g fill="#1c6cc8">
            <rect x="104" y="6" width="6" height="10" rx="3" /><path d="M101 12h12l-4 6h-4z" />
            <path d="M122 7h15v10h-15z" />
            <path d="M163 10l4-3q6 3 10 0l4 3-2 6h-14z" />
            <path d="M190 16q-1-9 8-9l-3 4 2 3 4-2-5 8z" />
          </g>
          <path d="M124 10h11M124 13h11" stroke="#fff" strokeDasharray="2 1" />
          <circle cx="151" cy="10" r="3" fill="#a8b4cc" />
        </svg>
      </Ime>
    </Screen>
  );
}
